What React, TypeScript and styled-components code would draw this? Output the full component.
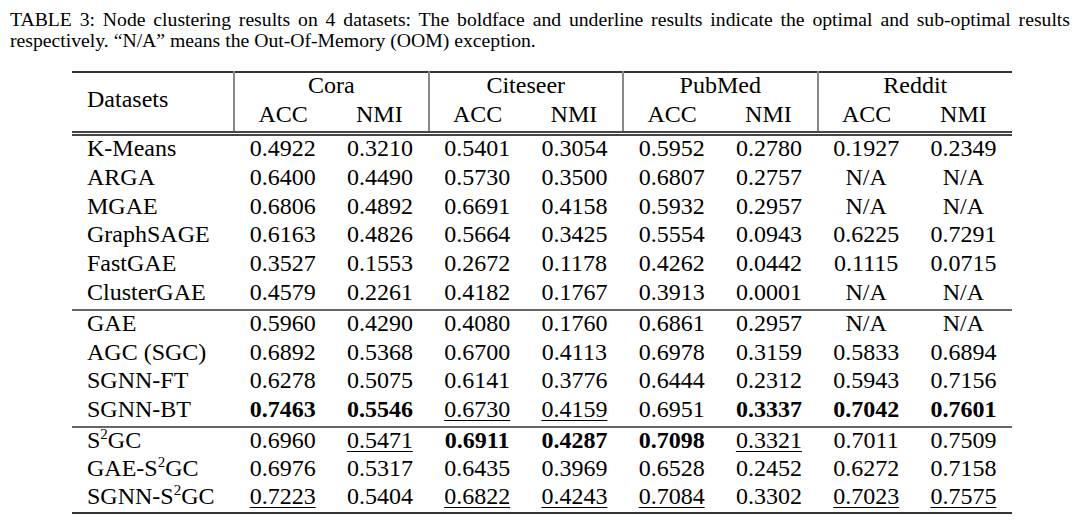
import React from 'react';
import styled, { createGlobalStyle } from 'styled-components';

const GlobalStyle = createGlobalStyle`
  body {
    margin: 0;
    background: #fff;
    color: #000;
    font-family: "Liberation Serif", "Times New Roman", serif;
  }
`;

const Page = styled.div`
  width: 1080px;
  height: 527px;
  overflow: hidden;
  background: #fff;
`;

const Caption = styled.p`
  margin: 0;
  padding: 9px 10px 0 10px;
  font-size: 19.7px;
  line-height: 21px;
  text-align: justify;
`;

const TableWrap = styled.div`
  padding: 20px 0 0 72px;
`;

const Table = styled.table`
  width: 940px;
  border-collapse: collapse;
  font-family: "Liberation Serif", "Times New Roman", serif;
  font-size: 24px;
  color: #000;
  table-layout: fixed;
  border-top: 2px solid #333;
  border-bottom: 2px solid #333;
`;

const Head = styled.thead`
  border-bottom: 5px double #444;
`;

const HeadCell = styled.th<{ $split?: boolean }>`
  font-weight: normal;
  height: 29px;
  padding: 0;
  text-align: center;
  vertical-align: top;
  line-height: 24px;
  border-right: ${(p) => (p.$split ? '2px solid #888' : 'none')};
`;

const NameHead = styled(HeadCell)`
  text-align: left;
  vertical-align: middle;
  padding: 0 0 6px 15px;
`;

const Group = styled.tbody`
  & + & {
    border-top: 2px solid #666;
  }
`;

const Row = styled.tr<{ $tight?: boolean }>`
  & > td {
    height: ${(p) => (p.$tight ? '28px' : '28.8px')};
  }
`;

const NameCell = styled.td`
  padding: 0 0 0 15px;
  vertical-align: top;
  line-height: 24px;
  white-space: nowrap;
`;

const Cell = styled.td<{ $best?: boolean; $second?: boolean }>`
  padding: 0;
  text-align: center;
  vertical-align: top;
  line-height: 24px;
  font-weight: ${(p) => (p.$best ? 'bold' : 'normal')};
  span {
    text-decoration: ${(p) => (p.$second ? 'underline' : 'none')};
    text-decoration-thickness: 1px;
    text-underline-offset: 3px;
  }
`;

const Sup = styled.sup`
  font-size: 15px;
  line-height: 0;
  vertical-align: 9px;
`;

type Val = string | [string, 'b' | 'u'];

const groups: { name: React.ReactNode; vals: Val[] }[][] = [
  [
    { name: 'K-Means', vals: ['0.4922', '0.3210', '0.5401', '0.3054', '0.5952', '0.2780', '0.1927', '0.2349'] },
    { name: 'ARGA', vals: ['0.6400', '0.4490', '0.5730', '0.3500', '0.6807', '0.2757', 'N/A', 'N/A'] },
    { name: 'MGAE', vals: ['0.6806', '0.4892', '0.6691', '0.4158', '0.5932', '0.2957', 'N/A', 'N/A'] },
    { name: 'GraphSAGE', vals: ['0.6163', '0.4826', '0.5664', '0.3425', '0.5554', '0.0943', '0.6225', '0.7291'] },
    { name: 'FastGAE', vals: ['0.3527', '0.1553', '0.2672', '0.1178', '0.4262', '0.0442', '0.1115', '0.0715'] },
    { name: 'ClusterGAE', vals: ['0.4579', '0.2261', '0.4182', '0.1767', '0.3913', '0.0001', 'N/A', 'N/A'] },
  ],
  [
    { name: 'GAE', vals: ['0.5960', '0.4290', '0.4080', '0.1760', '0.6861', '0.2957', 'N/A', 'N/A'] },
    { name: 'AGC (SGC)', vals: ['0.6892', '0.5368', '0.6700', '0.4113', '0.6978', '0.3159', '0.5833', '0.6894'] },
    { name: 'SGNN-FT', vals: ['0.6278', '0.5075', '0.6141', '0.3776', '0.6444', '0.2312', '0.5943', '0.7156'] },
    {
      name: 'SGNN-BT',
      vals: [['0.7463', 'b'], ['0.5546', 'b'], ['0.6730', 'u'], ['0.4159', 'u'], '0.6951', ['0.3337', 'b'], ['0.7042', 'b'], ['0.7601', 'b']],
    },
  ],
  [
    {
      name: <>S<Sup>2</Sup>GC</>,
      vals: ['0.6960', ['0.5471', 'u'], ['0.6911', 'b'], ['0.4287', 'b'], ['0.7098', 'b'], ['0.3321', 'u'], '0.7011', '0.7509'],
    },
    { name: <>GAE-S<Sup>2</Sup>GC</>, vals: ['0.6976', '0.5317', '0.6435', '0.3969', '0.6528', '0.2452', '0.6272', '0.7158'] },
    {
      name: <>SGNN-S<Sup>2</Sup>GC</>,
      vals: [['0.7223', 'u'], '0.5404', ['0.6822', 'u'], ['0.4243', 'u'], ['0.7084', 'u'], '0.3302', ['0.7023', 'u'], ['0.7575', 'u']],
    },
  ],
];

const datasets = ['Cora', 'Citeseer', 'PubMed', 'Reddit'];

export default function App() {
  return (
    <Page>
      <GlobalStyle />
      <Caption>
        TABLE 3: Node clustering results on 4 datasets: The boldface and underline results indicate the optimal and
        sub-optimal results respectively. “N/A” means the Out-Of-Memory (OOM) exception.
      </Caption>
      <TableWrap>
        <Table>
          <colgroup>
            <col style={{ width: 162 }} />
            {Array.from({ length: 8 }).map((_, i) => (
              <col key={i} style={{ width: 97.25 }} />
            ))}
          </colgroup>
          <Head>
            <tr>
              <NameHead rowSpan={2} $split>
                Datasets
              </NameHead>
              {datasets.map((d, i) => (
                <HeadCell key={d} colSpan={2} $split={i < 3}>
                  {d}
                </HeadCell>
              ))}
            </tr>
            <tr>
              {datasets.map((d, i) => (
                <React.Fragment key={d}>
                  <HeadCell>ACC</HeadCell>
                  <HeadCell $split={i < 3}>NMI</HeadCell>
                </React.Fragment>
              ))}
            </tr>
          </Head>
          {groups.map((g, gi) => (
            <Group key={gi}>
              {g.map((r, ri) => (
                <Row key={ri} $tight={gi === 2}>
                  <NameCell>{r.name}</NameCell>
                  {r.vals.map((v, vi) => {
                    const text = typeof v === 'string' ? v : v[0];
                    const mark = typeof v === 'string' ? undefined : v[1];
                    return (
                      <Cell key={vi} $best={mark === 'b'} $second={mark === 'u'}>
                        <span>{text}</span>
                      </Cell>
                    );
                  })}
                </Row>
              ))}
            </Group>
          ))}
        </Table>
      </TableWrap>
    </Page>
  );
}
